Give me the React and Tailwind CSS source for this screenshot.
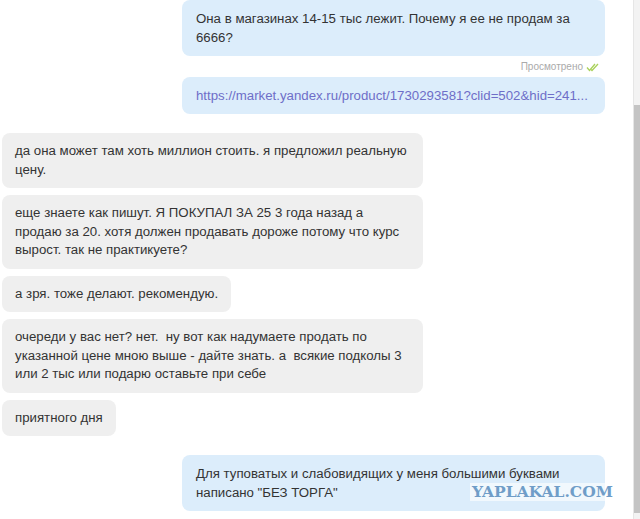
import React from 'react';

const font = { fontFamily: '"Liberation Sans", Arial, sans-serif' };

function Mine({ lines, children }) {
    return (
        <div className="self-end mr-[28px] w-[423px] rounded-lg bg-[#dcedfb] px-[14px] py-[9px] text-[13.25px] leading-[19px] text-[#333]">
            {children || lines.map((l, i) => <div key={i}>{l}</div>)}
        </div>
    );
}

function Theirs({ lines, wide }) {
    return (
        <div className={(wide ? 'w-[421px]' : 'w-fit') + ' ml-[2px] rounded-lg bg-[#efefef] px-[13px] py-[9px] text-[13.25px] leading-[18.5px] text-[#333]'}>
            {lines.map((l, i) => <div key={i} className="whitespace-pre">{l}</div>)}
        </div>
    );
}

export default function App() {
    return (
        <div className="relative flex h-[519px] w-[640px] overflow-hidden bg-white" style={font}>
            <div className="flex flex-1 flex-col">
                {/* my messages */}
                <Mine lines={['Она в магазинах 14-15 тыс лежит. Почему я ее не продам за', '6666?']} />
                <div className="mr-[34px] mt-[5px] mb-[4px] flex items-center justify-end gap-[3px] text-[10px] leading-[12px] text-[#aaa]">
                    Просмотрено
                    <svg width="13" height="9" viewBox="0 0 13 9" fill="none" stroke="#a9d15a" strokeWidth="1.3">
                        <path d="M1 4.5 L3.5 7.5 L9 1" />
                        <path d="M5 6.5 L6 7.5 L12 1" />
                    </svg>
                </div>
                <Mine>
                    <div className="whitespace-nowrap text-[#6e6ec8]">https://market.yandex.ru/product/1730293581?clid=502&amp;hid=241...</div>
                </Mine>

                {/* their messages */}
                <div className="mt-[19px] flex flex-col gap-[7px]">
                    <Theirs wide lines={['да она может там хоть миллион стоить. я предложил реальную', 'цену.']} />
                    <Theirs wide lines={['еще знаете как пишут. Я ПОКУПАЛ ЗА 25 3 года назад а', 'продаю за 20. хотя должен продавать дороже потому что курс', 'вырост. так не практикуете?']} />
                    <Theirs lines={['а зря. тоже делают. рекомендую.']} />
                    <Theirs wide lines={['очереди у вас нет? нет.  ну вот как надумаете продать по', 'указанной цене мною выше - дайте знать. а  всякие подколы 3', 'или 2 тыс или подарю оставьте при себе']} />
                    <Theirs lines={['приятного дня']} />
                </div>

                <div className="mt-[19px] flex flex-col">
                    <Mine lines={['Для туповатых и слабовидящих у меня большими буквами', 'написано "БЕЗ ТОРГА"']} />
                </div>
            </div>

            {/* scrollbar */}
            <div className="flex w-[7px] flex-col border-l border-[#e6e6e6] bg-[#f3f3f3]">
                <div className="h-[105px]" />
                <div className="h-[408px] bg-[#c4c4c4]" />
            </div>

            {/* watermark */}
            <div className="absolute left-[470px] top-[483px] bg-white/60 px-[2px] text-[15.5px] font-bold leading-[18px] text-[#6f9dc8]" style={{ fontFamily: '"DejaVu Serif", serif' }}>
                YAPLAKAL.COM
            </div>
        </div>
    );
}
